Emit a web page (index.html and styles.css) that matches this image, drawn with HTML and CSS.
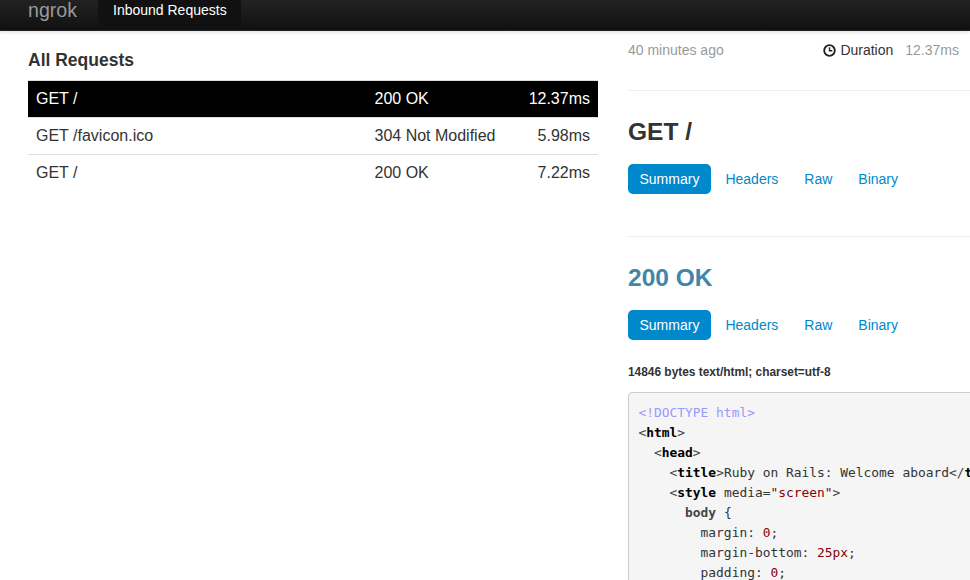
FILE: index.html
```html
<!DOCTYPE html>
<html lang="en">
<head>
<meta charset="utf-8">
<title>ngrok</title>
<link rel="stylesheet" href="styles.css">
</head>
<body>
<header class="navbar">
  <span class="brand">ngrok</span>
  <span class="nav-item">Inbound Requests</span>
</header>
<main class="page">
  <section class="left">
    <h4 class="all-title">All Requests</h4>
    <table class="requests">
      <tr class="selected"><td class="c-path">GET /</td><td class="c-status">200 OK</td><td class="c-time">12.37ms</td></tr>
      <tr><td class="c-path">GET /favicon.ico</td><td class="c-status">304 Not Modified</td><td class="c-time">5.98ms</td></tr>
      <tr><td class="c-path">GET /</td><td class="c-status">200 OK</td><td class="c-time">7.22ms</td></tr>
    </table>
  </section>
  <section class="right">
    <div class="meta">
      <span class="ago">40 minutes ago</span>
      <span class="duration">
        <svg class="clock" viewBox="0 0 12 12" width="13" height="13"><circle cx="6" cy="6" r="4.9" fill="none" stroke="#222" stroke-width="1.7"/><path d="M6 3v3.3h2.6" fill="none" stroke="#222" stroke-width="1.3"/></svg>
        <span class="d-label">Duration</span><span class="d-value">12.37ms</span>
      </span>
    </div>
    <hr class="rule">
    <h3 class="heading">GET /</h3>
    <nav class="pills">
      <a class="pill active">Summary</a><a class="pill">Headers</a><a class="pill">Raw</a><a class="pill">Binary</a>
    </nav>
    <hr class="rule rule-two">
    <h3 class="heading status">200 OK</h3>
    <nav class="pills">
      <a class="pill active">Summary</a><a class="pill">Headers</a><a class="pill">Raw</a><a class="pill">Binary</a>
    </nav>
    <p class="bytes">14846 bytes text/html; charset=utf-8</p>
    <pre class="code"><span class="dt">&lt;!DOCTYPE html&gt;</span>
<span class="p">&lt;</span><b>html</b><span class="p">&gt;</span>
  <span class="p">&lt;</span><b>head</b><span class="p">&gt;</span>
    <span class="p">&lt;</span><b>title</b><span class="p">&gt;</span>Ruby on Rails: Welcome aboard<span class="p">&lt;/</span><b>title</b><span class="p">&gt;</span>
    <span class="p">&lt;</span><b>style</b> media=<span class="str">"screen"</span><span class="p">&gt;</span>
      <span class="sel">body</span> {
        margin: <span class="str">0</span>;
        margin-bottom: <span class="str">25px</span>;
        padding: <span class="str">0</span>;
</pre>
  </section>
</main>
</body>
</html>
```
FILE: styles.css
```css
html, body {
  margin: 0;
  padding: 0;
  height: 580px;
  overflow: hidden;
  background: #fff;
}
body {
  font-family: "Liberation Sans", Arial, sans-serif;
  font-size: 14px;
  color: #333;
}
.navbar {
  display: flex;
  align-items: stretch;
  height: 30px;
  padding-left: 28px;
  background: linear-gradient(#222222, #111111);
  box-shadow: 0 1px 0 #222, 0 2px 4px rgba(0,0,0,.15);
}
.brand {
  width: 70px;
  font-size: 19.6px;
  line-height: 20px;
  color: #999;
}
.nav-item {
  width: 143px;
  padding-left: 15px;
  box-sizing: border-box;
  background: #111;
  color: #fff;
  font-size: 14px;
  line-height: 20px;
}
.page {
  display: grid;
  grid-template-columns: 570px 1fr;
  column-gap: 30px;
  padding-left: 28px;
}
.left { min-width: 0; }
.all-title {
  margin: 20px 0 10px;
  font-size: 17.5px;
  line-height: 20px;
  font-weight: bold;
  color: #333;
}
.requests {
  width: 570px;
  border-collapse: collapse;
  font-size: 16px;
  table-layout: fixed;
}
.requests td {
  height: 36px;
  padding: 0 8px;
  border-top: 1px solid #ddd;
  line-height: 20px;
}
.c-path { width: 322.5px; }
.c-status { width: 130px; }
.requests .c-time { text-align: right; width: auto; }
.selected td { background: #000; color: #fff; }
.right { min-width: 0; overflow: hidden; }
.meta {
  display: flex;
  justify-content: space-between;
  width: 331px;
  margin-top: 10px;
  height: 20px;
  line-height: 20px;
}
.ago, .d-value { color: #999; }
.duration { display: flex; align-items: center; }
.clock { margin-right: 4px; }
.d-label { margin-right: 12px; }
.rule {
  margin: 30px 0 0;
  border: 0;
  border-top: 1px solid #eee;
}
.heading {
  margin: 26px 0 0;
  font-size: 24.5px;
  line-height: 30px;
  font-weight: bold;
  color: #333;
}
.status { color: #4285a8; }
.pills {
  display: flex;
  margin-top: 17px;
}
.pill {
  padding: 0 11.5px;
  margin-right: 3px;
  line-height: 30px;
  border-radius: 5px;
  color: #0088cc;
}
.pill.active {
  background: #0088cc;
  color: #fff;
}
.rule-two { margin-top: 42px; }
.bytes {
  margin: 25px 0 0;
  font-size: 11.9px;
  line-height: 14px;
  font-weight: bold;
}
.code {
  margin: 13px 0 0;
  padding: 10px 9.5px;
  width: 600px;
  background: #f5f5f5;
  border: 1px solid #ccc;
  border-radius: 4px;
  font-family: "Droid Sans Mono", "Noto Mono", "DejaVu Sans Mono", monospace;
  font-size: 12.9px;
  line-height: 20px;
  color: #333;
  white-space: pre;
}
.code b { color: #000; }
.p { color: #444; }
.sel { font-weight: bold; color: #444; }
.dt { color: #9999ff; }
.str { color: #880000; }
```
